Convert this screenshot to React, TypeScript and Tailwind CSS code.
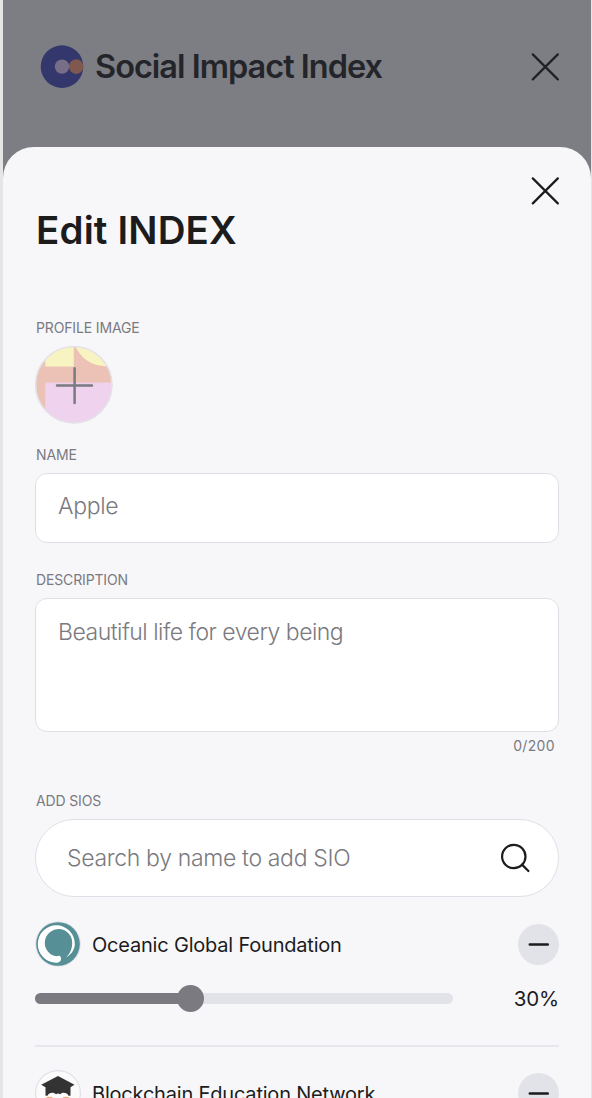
import { useState, type ReactNode } from "react";

type Sio = { name: string; percent?: number; logo: ReactNode };

function Cross() {
  return (
    <svg width="28" height="28" viewBox="0 0 28 28" fill="none" stroke="currentColor" strokeWidth="2.2" strokeLinecap="round">
      <path d="M1.8 1.4 26.8 26.4M26.8 1.4 1.8 26.4" />
    </svg>
  );
}

function IndexLogo() {
  return (
    <svg width="44" height="43" viewBox="0 0 44 43">
      <defs>
        <clipPath id="index-disc">
          <circle cx="22" cy="21.6" r="21.3" />
        </clipPath>
      </defs>
      <g clipPath="url(#index-disc)">
        <rect width="44" height="43" fill="#34376c" />
        <circle cx="36.2" cy="21.6" r="7.3" fill="#81584d" />
        <circle cx="22" cy="21.6" r="7.2" fill="#776e87" />
      </g>
    </svg>
  );
}

function ProfilePicture() {
  return (
    <svg width="78" height="78" viewBox="0 0 78 78">
      <defs>
        <clipPath id="profile-disc">
          <circle cx="38.8" cy="38.8" r="38.5" />
        </clipPath>
      </defs>
      <g clipPath="url(#profile-disc)">
        <rect width="78" height="78" fill="#ecc2b6" />
        <rect x="10.3" y="0" width="28.4" height="20.5" fill="#f8f4c1" />
        <path d="M40 0C46 12 56 20.2 71 20.2H78V0Z" fill="#f8f4c1" />
        <rect x="10.3" y="36.6" width="68" height="42" fill="#efd3ee" />
      </g>
      <circle cx="38.8" cy="38.8" r="38.2" fill="none" stroke="#e2e2e8" strokeWidth="1.5" />
      <path d="M39.6 22.3V57M22 39.6H57" stroke="#7a7a80" strokeWidth="2.5" strokeLinecap="round" />
    </svg>
  );
}

function OceanicLogo() {
  return (
    <svg width="46" height="46" viewBox="0 0 46 46">
      <circle cx="23" cy="23" r="22.8" fill="#e0e1e8" />
      <circle cx="23" cy="23" r="21.8" fill="#568f96" />
      <path
        d="M25 35.2C23.500 34.200 22.500 35.600 20 35A13.700 13.700 0 1 1 37.200 21.800C37.200 28 35 33 31 36.500C36 33.500 39.800 29 39.800 23A18.500 18.700 0 1 0 21.300 41.700C24.500 41.700 26 40 26 38C26 36.500 26 35.700 25 35.200Z"
        fill="#fff"
      />
    </svg>
  );
}

function EducationLogo() {
  return (
    <svg width="46" height="46" viewBox="0 0 46 46">
      <circle cx="23" cy="23" r="22.4" fill="#fbfbfb" stroke="#e0e1e8" strokeWidth="1.2" />
      <path d="M23 6 6.200 14.800 10.500 17.200V25.800H12.500C13.500 22.300 19 21.800 21 24.300Q23 22.800 25 24.300C27 21.800 32.500 22.300 33.500 25.800H35.500V17.200L39.500 14.800Z" fill="#333" />
      <path d="M11.500 28Q14.500 26.500 17.500 28M28 28Q31 26.500 34 28" stroke="#e9a46c" strokeWidth="1.2" fill="none" />
    </svg>
  );
}

const sios: Sio[] = [
  { name: "Oceanic Global Foundation", percent: 30, logo: <OceanicLogo /> },
  { name: "Blockchain Education Network", logo: <EducationLogo /> },
];

function Label({ children }: { children: ReactNode }) {
  return <div className="h-5 pl-px text-[14px] leading-5 tracking-[-0.14px] text-[#7a7a80]">{children}</div>;
}

function Allocation({ percent }: { percent: number }) {
  const filled = 143 + (percent - 30) * 4;
  return (
    <>
      <div className="mt-[17px] flex h-7 items-center justify-between">
        <div className="flex h-[11px] w-[418px] items-center rounded-full bg-[#e2e3e8]">
          <div className="h-[11px] rounded-l-full bg-[#7a7a80]" style={{ width: filled }} />
          <div className="-ml-px size-[27px] shrink-0 rounded-full bg-[#7a7a80]" />
        </div>
        <span className="pt-0.5 text-[20.500px] leading-7 tracking-[-0.2px] text-[#1c1c1c]">{percent}%</span>
      </div>
      <div className="mt-[33px] mb-[23px] h-[2px] bg-[#e7e7ed]" />
    </>
  );
}

function SioRow({ sio }: { sio: Sio }) {
  return (
    <section className="shrink-0">
      <div className="flex h-[46px] items-center">
        {sio.logo}
        <span className="ml-[11px] grow pt-0.5 text-[20px] leading-6 tracking-[-0.2px] whitespace-nowrap text-[#1c1c1c]">{sio.name}</span>
        <button className="flex size-[41px] items-center justify-center rounded-full bg-[#e2e3e8]" aria-label="Remove">
          <svg width="21" height="5" viewBox="0 0 21 5">
            <path d="M1.800 2.500H19.800" stroke="#1c1c1c" strokeWidth="2.600" strokeLinecap="round" />
          </svg>
        </button>
      </div>
      {sio.percent !== undefined && <Allocation percent={sio.percent} />}
    </section>
  );
}

export default function App() {
  const [items] = useState(sios);
  return (
    <div className="h-[1098px] w-[592px] overflow-hidden bg-[#e5e5e5] pr-px pl-[3px] font-['Inter','Liberation_Sans',sans-serif]">
      <header className="flex h-[187px] items-start bg-[#7d7e83] pt-[45px] pr-8 pl-[37px] text-[#24252a]">
        <IndexLogo />
        <h1 className="ml-[11px] h-[43px] grow text-[32.500px] leading-[43px] font-semibold tracking-[-1px] whitespace-nowrap">Social Impact Index</h1>
        <div className="pt-[8px] text-[#202124]">
          <Cross />
        </div>
      </header>
      <main className="-mt-10 flex h-[951px] flex-col overflow-hidden rounded-t-[31px] bg-[#f7f7fa] px-8">
        <div className="flex h-[58px] shrink-0 items-end justify-end text-[#1c1c1c]">
          <Cross />
        </div>
        <h2 className="mt-[1px] h-12 shrink-0 pl-px text-[38.500px] leading-12 font-semibold tracking-[0.15px] text-[#1c1c1c]">Edit INDEX</h2>
        <div className="mt-[64px]">
          <Label>PROFILE IMAGE</Label>
        </div>
        <div className="mt-2 h-[78px] shrink-0">
          <ProfilePicture />
        </div>
        <div className="mt-[21px]">
          <Label>NAME</Label>
        </div>
        <input
          className="mt-2 h-[70px] shrink-0 rounded-[12px] border border-[#dfdfe7] bg-white px-[22px] pb-[5px] text-[23px] font-light tracking-[-0.3px] text-[#7a7a80] outline-none placeholder:text-[#7a7a80] placeholder:opacity-100"
          placeholder="Apple"
        />
        <div className="mt-[27px]">
          <Label>DESCRIPTION</Label>
        </div>
        <textarea
          className="mt-2 h-[134px] shrink-0 resize-none rounded-[12px] border border-[#dfdfe7] bg-white px-[22px] pt-[17px] text-[23px] leading-8 font-light tracking-[-0.5px] outline-none placeholder:text-[#7a7a80] placeholder:opacity-100"
          placeholder="Beautiful life for every being"
        />
        <div className="mt-1 h-5 shrink-0 pr-1 text-right text-[14px] leading-5 tracking-[0.35px] text-[#7a7a80]">0/200</div>
        <div className="mt-[35px]">
          <Label>ADD SIOS</Label>
        </div>
        <div className="mt-2 flex h-[78px] shrink-0 items-center rounded-full border border-[#dfdfe7] bg-white pr-[28px] pl-[31px]">
          <input
            className="min-w-0 grow text-[23px] font-light tracking-[-0.34px] outline-none placeholder:text-[#7a7a80] placeholder:opacity-100"
            placeholder="Search by name to add SIO"
          />
          <svg width="30" height="30" viewBox="0 0 30 30" fill="none" stroke="#1c1c1c" strokeWidth="2.2" strokeLinecap="round">
            <circle cx="13.800" cy="13.500" r="11.700" />
            <path d="M22 21.600 28.400 28" />
          </svg>
        </div>
        <div className="mt-6 shrink-0">
          {items.map((sio) => (
            <SioRow key={sio.name} sio={sio} />
          ))}
        </div>
      </main>
    </div>
  );
}
